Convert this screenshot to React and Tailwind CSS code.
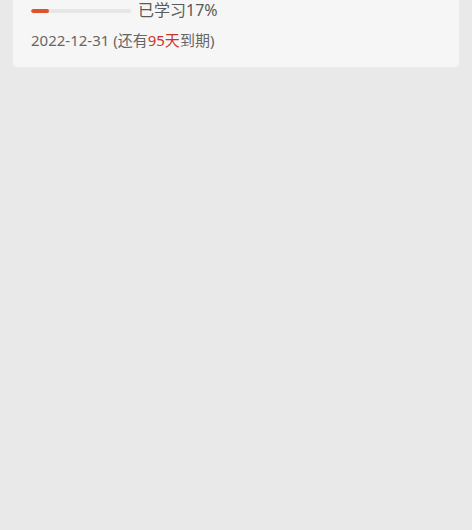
export default function App() {
  return (
    <div
      className="w-[472px] h-[530px] bg-[#e9e9e9] overflow-hidden"
      style={{ fontFamily: '"Noto Sans", "Noto Sans CJK SC", sans-serif' }}
    >
      <div className="mx-[13px] w-[446px] bg-[#f6f6f6] rounded-b-[4px] pl-[18px] pb-[17px]">
        <div className="flex items-center h-[21px]">
          <div className="w-[100px] h-[4px] rounded-full bg-[#e6e6e6] overflow-hidden">
            <div className="w-[18px] h-full rounded-full bg-[#e0502a]" />
          </div>
          <span className="ml-[7px] text-[16px] leading-[21px] text-[#5a5a5a]">已学习17%</span>
        </div>
        <div className="mt-[9px] text-[15px] leading-[20px] text-[#666666]">
          2022-12-31 (还有<span className="text-[#c8342c]">95天</span>到期)
        </div>
      </div>
    </div>
  );
}
